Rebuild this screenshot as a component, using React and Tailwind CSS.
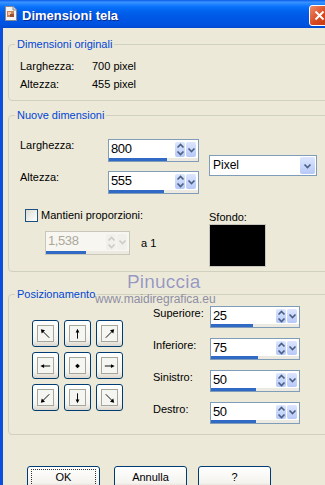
import React from "react";

const faceBg = "bg-[linear-gradient(to_bottom,#FFFFFF,#F4F3EE_75%,#DCD7CB)]";

function Chev({ dir = "down", color = "#4D6185" }) {
  const d = dir === "down" ? "M1.5 1.5 L4.5 4.5 L7.5 1.5" : "M1.5 4.5 L4.5 1.5 L7.5 4.5";
  return (
    <svg width="9" height="6" viewBox="0 0 9 6">
      <path d={d} stroke={color} strokeWidth="1.7" fill="none" />
    </svg>
  );
}

function Spin({ value, pct, className = "", disabled }) {
  const btn = disabled ? "bg-[#F1F0EA]" : "bg-[linear-gradient(to_bottom,#DCE6FE,#B6C8F6)]";
  const ac = disabled ? "#CFCDC3" : "#4D6185";
  return (
    <div
      className={`flex flex-col border ${
        disabled ? "border-[#C9C7BA] bg-[#F7F6F1]" : "border-[#7F9DB9] bg-white"
      } ${className}`}
    >
      <div className="flex flex-1 items-stretch pt-[2px] pr-[2px] pb-[1px]">
        <div
          className={`flex-1 pl-[2px] text-[13px] leading-[14px] tracking-[-0.4px] ${
            disabled ? "text-[#ACA899]" : "text-black"
          }`}
        >
          {value}
        </div>
        <div className={`flex w-[10px] flex-col items-center justify-center gap-[1px] rounded-[2px] ${btn}`}>
          <Chev dir="up" color={ac} />
          <Chev dir="down" color={ac} />
        </div>
        <div className={`ml-[1px] flex w-[10px] items-center justify-center rounded-[2px] ${btn}`}>
          <Chev dir="down" color={ac} />
        </div>
      </div>
      <div className="h-[3px] bg-[#ECEAE0]">
        <div className="h-full bg-[#316AC5]" style={{ width: `${pct}%` }} />
      </div>
    </div>
  );
}

function Group({ title, children, className = "", innerClass = "" }) {
  return (
    <fieldset className={`rounded-[4px] border border-[#D0D0BF] ${className}`}>
      <legend className="ml-[6px] px-[2px] text-[11px] leading-[13px] text-[#0046D5]">{title}</legend>
      <div className={innerClass}>{children}</div>
    </fieldset>
  );
}

// small black arrows inside the sunken squares
const arrows = {
  nw: { line: "M12 12 L5 5", head: "3,3 7.5,4 4,7.5" },
  n: { line: "M8 13 L8 5", head: "8,2.5 6,6.5 10,6.5" },
  ne: { line: "M4 12 L11 5", head: "13,3 8.5,4 12,7.5" },
  w: { line: "M13 8 L5 8", head: "2.5,8 6.5,6 6.5,10" },
  c: { line: "", head: "8,5.5 10.5,8 8,10.5 5.5,8" },
  e: { line: "M3 8 L11 8", head: "13.5,8 9.5,6 9.5,10" },
  sw: { line: "M12 4 L5 11", head: "3,13 4,8.5 7.5,12" },
  s: { line: "M8 3 L8 11", head: "8,13.5 6,9.5 10,9.5" },
  se: { line: "M4 4 L11 11", head: "13,13 12,8.5 8.5,12" },
};

function ArrowBtn({ k }) {
  const a = arrows[k];
  return (
    <div className={`flex h-[27px] w-[27px] items-center justify-center rounded-[3px] border border-[#003C74] ${faceBg}`}>
      <div className="flex h-[17px] w-[17px] items-center justify-center border border-[#A7A69C] bg-[#F5F5F1]">
        <svg width="16" height="16" viewBox="0 0 16 16">
          {a.line && <path d={a.line} stroke="#000" strokeWidth="1" />}
          <polygon points={a.head} fill="#000" />
        </svg>
      </div>
    </div>
  );
}

function Button({ children, focus, className = "" }) {
  return (
    <div
      className={`flex h-[23px] w-[73px] items-center justify-center rounded-[3px] border border-[#003C74] ${faceBg} ${className}`}
    >
      <div
        className={`flex h-[17px] w-[65px] items-center justify-center text-[11px] leading-[13px] text-black ${
          focus ? "border border-dotted border-[#333]" : ""
        }`}
      >
        {children}
      </div>
    </div>
  );
}

export default function App() {
  return (
    <div className="relative h-[485px] w-[325px] overflow-hidden bg-[#ECE9D8] font-['Liberation_Sans',Arial,sans-serif]">
      <div className="w-[345px]">
        {/* title bar */}
        <div className="flex h-[28px] items-start bg-[linear-gradient(to_bottom,#0A5DEA_0%,#3A93FF_8%,#2486FF_14%,#0A72FA_24%,#0062EE_40%,#0058E6_60%,#0054E3_78%,#0050DC_92%,#0047CF_100%)] pl-[4px]">
          <svg className="mt-[6px]" width="14" height="15" viewBox="0 0 14 15">
            <path d="M1.5 0.5 H9 L12.5 4 V14.5 H1.5 Z" fill="#F4F4F4" stroke="#8A8A8A" />
            <path d="M9 0.5 V4 H12.5" fill="#D8D8D8" stroke="#8A8A8A" />
            <rect x="3" y="5" width="7" height="6" fill="#C9825A" />
            <rect x="4" y="6" width="3" height="3" fill="#F2C9A0" />
            <rect x="6" y="8" width="4" height="3" fill="#9A5030" />
          </svg>
          <span className="ml-[4px] mt-[8px] text-[13px] font-bold leading-[16px] text-white [text-shadow:1px_1px_0_#0A2A8C]">
            Dimensioni tela
          </span>
          <div className="flex-1" />
          <div className="mr-[15px] mt-[5px] flex h-[21px] w-[21px] items-center justify-center rounded-[3px] border border-white bg-[linear-gradient(135deg,#EE8C6A,#D8481F_55%,#C2360F)]">
            <svg width="11" height="11" viewBox="0 0 11 11">
              <path d="M1.5 1.5 L9.5 9.5 M9.5 1.5 L1.5 9.5" stroke="#fff" strokeWidth="2" />
            </svg>
          </div>
        </div>

        <div className="flex">
          <div className="h-[457px] w-[3px] bg-[#0B4FDF]" />
          <div className="ml-[5px] w-[330px] text-[11px] leading-[13px] text-black">
            <Group title="Dimensioni originali" className="mt-[10px]" innerClass="flex flex-col gap-[5px] pl-[11px] pt-[9px] pb-[9px]">
              <div className="flex">
                <span className="w-[72px]">Larghezza:</span>
                <span>700 pixel</span>
              </div>
              <div className="flex">
                <span className="w-[72px]">Altezza:</span>
                <span>455 pixel</span>
              </div>
            </Group>

            <Group title="Nuove dimensioni" className="mt-[8px]" innerClass="pl-[11px] pt-[17px] pb-[4px]">
              <div className="flex">
                <div className="flex flex-col gap-[9px]">
                  <div className="flex">
                    <span className="w-[88px]">Larghezza:</span>
                    <Spin value="800" pct={65} className="h-[23px] w-[91px]" />
                  </div>
                  <div className="flex">
                    <span className="w-[88px]">Altezza:</span>
                    <Spin value="555" pct={62} className="h-[23px] w-[91px]" />
                  </div>
                </div>
                <div className="ml-[10px] mt-[16px] flex h-[21px] w-[108px] items-stretch border border-[#7F9DB9] bg-white">
                  <span className="flex-1 pl-[3px] text-[12px] leading-[19px]">Pixel</span>
                  <div className="m-[1px] flex w-[15px] items-center justify-center rounded-[2px] bg-[linear-gradient(to_bottom,#DCE6FE,#B6C8F6)]">
                    <Chev dir="down" />
                  </div>
                </div>
              </div>

              <div className="mt-[15px] flex">
                <div className="w-[189px]">
                  <div className="ml-[5px] flex items-center">
                    <div className="h-[13px] w-[13px] border border-[#1C5180] bg-[linear-gradient(135deg,#DCDCD4,#FFFFFF)]" />
                    <span className="ml-[3px]">Mantieni proporzioni:</span>
                  </div>
                  <div className="ml-[25px] mt-[9px] flex items-center">
                    <Spin value="1,538" pct={48} disabled className="h-[24px] w-[85px]" />
                    <span className="ml-[11px]">a 1</span>
                  </div>
                </div>
                <div className="mt-[2px]">
                  <div>Sfondo:</div>
                  <div className="h-[43px] w-[57px] border border-[#C8C6BC] bg-black" />
                </div>
              </div>
            </Group>

            <Group title="Posizionamento" className="mt-[16px]" innerClass="flex pl-[23px] pt-[5px] pb-[10px]">
              <div className="mt-[14px] grid h-fit grid-cols-3 gap-[5px]">
                {["nw", "n", "ne", "w", "c", "e", "sw", "s", "se"].map((k) => (
                  <ArrowBtn key={k} k={k} />
                ))}
              </div>
              <div className="ml-[30px] flex flex-col gap-[10px]">
                {[
                  ["Superiore:", "25", 48],
                  ["Inferiore:", "75", 53],
                  ["Sinistro:", "50", 51],
                  ["Destro:", "50", 51],
                ].map(([l, v, p]) => (
                  <div key={l} className="flex items-start">
                    <span className="mt-[1px] w-[57px]">{l}</span>
                    <Spin value={v} pct={p} className="h-[22px] w-[90px]" />
                  </div>
                ))}
              </div>
            </Group>

            <div className="ml-[19px] mt-[31px] flex">
              <Button focus>OK</Button>
              <Button className="ml-[14px]">Annulla</Button>
              <Button className="ml-[11px]">?</Button>
            </div>
          </div>
        </div>
      </div>

      {/* watermark */}
      <div className="absolute left-[127px] top-[272px] text-[19px] leading-[19px] tracking-[0.2px] text-[#9898BC] [text-shadow:0_0_1px_#ffffff]">
        Pinuccia
      </div>
      <div className="absolute left-[95px] top-[293px] text-[12px] leading-[12px] text-[#8E8EA4]">
        www.maidiregrafica.eu
      </div>
    </div>
  );
}
